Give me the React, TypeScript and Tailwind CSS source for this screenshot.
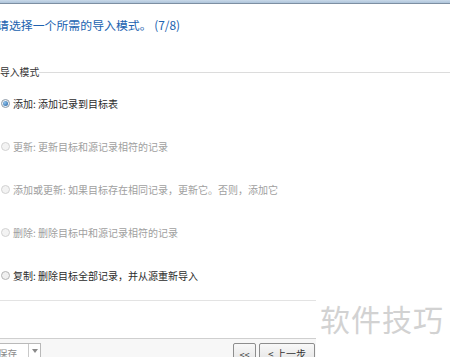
import React from "react";

const font = "font-['Microsoft_YaHei','Noto_Sans_CJK_SC','Noto_Sans',sans-serif]";

function Radio({ checked, disabled }: { checked?: boolean; disabled?: boolean }) {
  return (
    <span
      className={
        "w-[9px] h-[9px] rounded-full border flex items-center justify-center shrink-0 " +
        (disabled
          ? "border-[#d2d2d2] bg-[#f3f3f3]"
          : checked
          ? "border-[#8e9aa6] bg-[#eef2f6]"
          : "border-[#b4b4b4] bg-[#f0f0f0]")
      }
    >
      {checked && (
        <span className="w-[5px] h-[5px] rounded-full bg-[radial-gradient(circle_at_35%_35%,#8fc3ee,#1f5e9e)]" />
      )}
    </span>
  );
}

function Option({
  text,
  checked,
  disabled,
  dark,
}: {
  text: string;
  checked?: boolean;
  disabled?: boolean;
  dark?: boolean;
}) {
  return (
    <div className="h-[43px] flex items-center gap-[3px] pl-[1px]">
      <Radio checked={checked} disabled={disabled} />
      <span
        className={
          "text-[10px] leading-none whitespace-nowrap " +
          (dark ? "text-[#2b2b2b]" : "text-[#a0a0a0]")
        }
      >
        {text}
      </span>
    </div>
  );
}

export default function App() {
  return (
    <div className={"w-[450px] h-[357px] bg-white relative overflow-hidden " + font}>
      <div className="h-[4px] bg-gradient-to-b from-[#c9d9e9] to-[#aec4da] border-b border-[#7d8fa2]" />
      <div className="mt-[13px] ml-[-3px] text-[11.9px] leading-[15px] text-[#2062b0] whitespace-nowrap">
        请选择一个所需的导入模式。&nbsp;(7/8)
      </div>
      <div className="mt-[35px] flex items-center h-[12px]">
        <span className="text-[9.8px] leading-none text-[#333] whitespace-nowrap">导入模式</span>
        <div className="flex-1 h-px bg-[#dcdcdc] -mt-[2px]" />
      </div>
      <div className="mt-[3px] flex flex-col">
        <Option text="添加: 添加记录到目标表" checked dark />
        <Option text="更新: 更新目标和源记录相符的记录" disabled />
        <Option text="添加或更新: 如果目标存在相同记录，更新它。否则，添加它" disabled />
        <Option text="删除: 删除目标中和源记录相符的记录" disabled />
        <Option text="复制: 删除目标全部记录，并从源重新导入" dark />
      </div>
      <div className="mt-[3px] h-px bg-[#e3e3e3]" />
      <div className="mt-[37px] border-t border-[#cfcfcf] bg-[#f7f7f7] h-[22px] flex items-start justify-between pr-[135px] pt-[4px]">
        <div className="h-[16px] w-[42px] border border-[#b9b9b9] bg-white flex items-center ml-[-1px]">
          <span className="flex-1 text-[9.5px] leading-none text-[#8a8a8a] mt-[5px] ml-[-2px]">保存</span>
          <span className="w-[12px] h-full border-l border-[#c9c9c9] flex items-center justify-center">
            <span className="w-0 h-0 border-l-[3px] border-r-[3px] border-t-[4px] border-l-transparent border-r-transparent border-t-[#8a8a8a]" />
          </span>
        </div>
        <div className="flex gap-[3px]">
          <div className="h-[22px] w-[23px] border border-[#8d8d8d] rounded-[2px] bg-gradient-to-b from-[#f8f8f8] to-[#e2e2e2] flex justify-center pt-[6px] text-[9px] text-[#333] leading-none">
            &lt;&lt;
          </div>
          <div className="h-[22px] w-[56px] border border-[#8d8d8d] rounded-[2px] bg-gradient-to-b from-[#f8f8f8] to-[#e2e2e2] flex justify-center pt-[5px] text-[10px] text-[#333] leading-none whitespace-nowrap">
            &lt; 上一步
          </div>
        </div>
      </div>
      <div className="absolute left-[316px] top-[288px] w-[134px] h-[69px] bg-white">
        <div className="mt-[15px] ml-[4px] text-[30px] leading-none text-[#d2d2d2] tracking-[1px] whitespace-nowrap">
          软件技巧
        </div>
      </div>
    </div>
  );
}
